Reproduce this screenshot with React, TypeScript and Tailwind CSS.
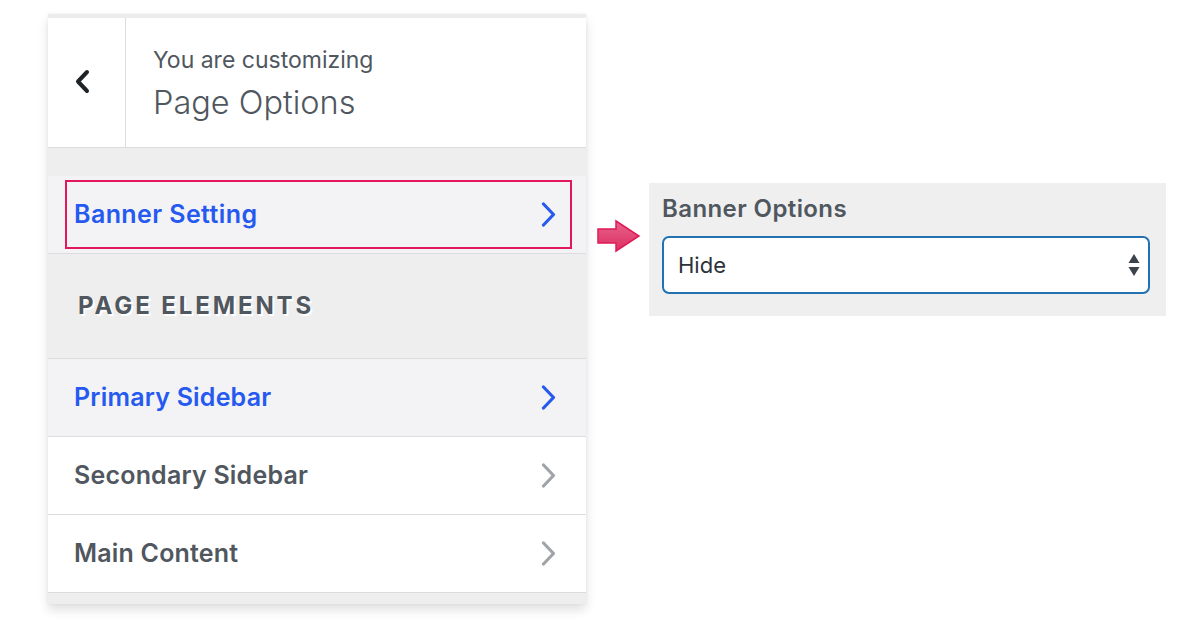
const font = { fontFamily: 'Inter, "Noto Sans", sans-serif' };

function Chevron({ color, dir = 'right', weight = 3.2 }: { color: string; dir?: 'left' | 'right'; weight?: number }) {
  return (
    <svg width="15" height="25" viewBox="0 0 15 25" className="block">
      <path
        d={dir === 'right' ? 'M2.5 2 L12.5 12.5 L2.5 23' : 'M12 3 L3 12.5 L12 22'}
        fill="none"
        stroke={color}
        strokeWidth={weight}
        strokeLinecap="round"
        strokeLinejoin="round"
      />
    </svg>
  );
}

type RowProps = { label: string; active?: boolean };

function NavRow({ label, active }: RowProps) {
  return (
    <div
      className={`flex h-[78px] items-center justify-between border-b border-[#dcdcde] pl-[26px] pr-[30px] ${
        active ? 'bg-[#f3f3f5]' : 'bg-white'
      }`}>
      <span
        className={`text-[25px] font-semibold tracking-[0.2px] ${active ? 'text-[#2559f0]' : 'text-[#50575e]'}`}>
        {label}
      </span>
      <Chevron color={active ? '#2559f0' : '#a0a3a8'} />
    </div>
  );
}

function BlockArrow() {
  return (
    <svg width="44" height="34" viewBox="0 0 44 34" className="block">
      <defs>
        <linearGradient id="ar" x1="0" y1="0" x2="0" y2="1">
          <stop offset="0" stopColor="#e8628a" />
          <stop offset="1" stopColor="#dc2f63" />
        </linearGradient>
      </defs>
      <path
        d="M1 10 H19 V2 L42 17 L19 32 V24 H1 Z"
        fill="url(#ar)"
        stroke="#e0195a"
        strokeWidth="1.5"
        strokeLinejoin="miter"
      />
    </svg>
  );
}

export default function App() {
  return (
    <div className="flex h-[630px] w-[1200px] items-start bg-white pl-[48px] pt-[14px]" style={font}>
      <div className="w-[538px] border-t-4 border-[#ececec] bg-[#eeeeee] pb-[11px] shadow-[0_6px_10px_rgba(0,0,0,0.12),0_0_3px_rgba(0,0,0,0.06)]">
        <div className="flex h-[130px] border-b border-[#dcdcde] bg-white">
          <div className="flex w-[78px] items-center justify-center border-r border-[#dcdcde] pb-[2px] pr-[8px]">
            <Chevron color="#1d2327" dir="left" weight={4} />
          </div>
          <div className="flex flex-col justify-center pl-[27px] pt-[2px]">
            <span className="text-[23px] leading-[30px] text-[#50575e]">You are customizing</span>
            <span className="mt-[9px] text-[32.5px] font-light leading-[38px] text-[#50575e]">Page Options</span>
          </div>
        </div>
        <div className="h-[28px]" />
        <div className="border-b border-[#dcdcde] bg-[#f3f3f5] py-[4px] pl-[17px] pr-[14px]">
          <div className="flex h-[69px] items-center justify-between border-2 border-[#e3175b] pl-[7px] pr-[14px]">
            <span className="text-[25px] font-semibold tracking-[0.4px] text-[#2559f0]">Banner Setting</span>
            <Chevron color="#2559f0" />
          </div>
        </div>
        <div className="flex h-[104px] items-center pl-[30px]">
          <span className="text-[24px] font-bold uppercase tracking-[2.9px] text-[#50575e] [text-shadow:2px_2px_0_#ffffff]">
            Page Elements
          </span>
        </div>
        <div className="border-t border-[#dcdcde]">
          <NavRow label="Primary Sidebar" active />
          <NavRow label="Secondary Sidebar" />
          <NavRow label="Main Content" />
        </div>
      </div>

      <div className="ml-[11px] mt-[205px]">
        <BlockArrow />
      </div>

      <div className="ml-[8px] mt-[169px] w-[517px] bg-[#efefef] pb-[22px] pl-[13px] pr-[16px] pt-[11px]">
        <div className="text-[24px] font-semibold leading-[30px] tracking-[0.4px] text-[#50575e]">Banner Options</div>
        <div className="mt-[12px] flex h-[58px] items-center justify-between rounded-[7px] border-2 border-[#2271b1] bg-white pl-[14px] pr-[8px]">
          <span className="text-[22px] text-[#2c3338]">Hide</span>
          <svg width="12" height="24" viewBox="0 0 12 24">
            <path d="M6 1 L11.5 10 H0.5 Z" fill="#3c434a" />
            <path d="M6 23 L11.5 14 H0.5 Z" fill="#3c434a" />
          </svg>
        </div>
      </div>
    </div>
  );
}
